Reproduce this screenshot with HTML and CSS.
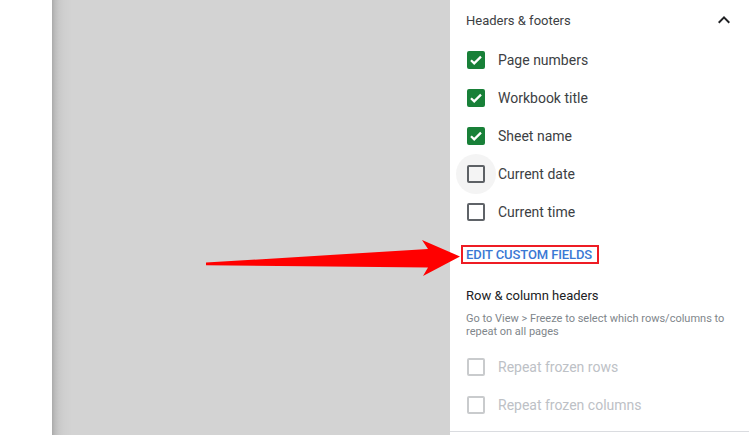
FILE: index.html
```html
<!DOCTYPE html>
<html>
<head>
<meta charset="utf-8">
<link rel="stylesheet" href="styles.css">
</head>
<body>
<div class="screen">
  <div class="gutter"></div>
  <div class="preview"></div>
  <div class="panel">
    <div class="section-head">
      <span class="section-title">Headers &amp; footers</span>
      <svg class="chevron" width="24" height="24" viewBox="0 0 24 24"><path d="M12 8l-6 6 1.41 1.41L12 10.83l4.59 4.58L18 14z" fill="#202124"/></svg>
    </div>
    <ul class="options">
      <li class="option"><span class="box checked"><svg width="18" height="18" viewBox="0 0 18 18"><path d="M4 9.2l3.2 3.2L14 5.6" fill="none" stroke="#fff" stroke-width="2.2"/></svg></span><span class="label">Page numbers</span></li>
      <li class="option"><span class="box checked"><svg width="18" height="18" viewBox="0 0 18 18"><path d="M4 9.2l3.2 3.2L14 5.6" fill="none" stroke="#fff" stroke-width="2.2"/></svg></span><span class="label">Workbook title</span></li>
      <li class="option"><span class="box checked"><svg width="18" height="18" viewBox="0 0 18 18"><path d="M4 9.2l3.2 3.2L14 5.6" fill="none" stroke="#fff" stroke-width="2.2"/></svg></span><span class="label">Sheet name</span></li>
      <li class="option"><span class="box hover"></span><span class="label">Current date</span></li>
      <li class="option"><span class="box"></span><span class="label">Current time</span></li>
    </ul>
    <div class="action-row">
      <span class="link-btn">EDIT CUSTOM FIELDS</span>
    </div>
    <div class="sub-title">Row &amp; column headers</div>
    <p class="hint">Go to View &gt; Freeze to select which rows/columns to repeat on all pages</p>
    <ul class="options disabled">
      <li class="option"><span class="box"></span><span class="label">Repeat frozen rows</span></li>
      <li class="option"><span class="box"></span><span class="label">Repeat frozen columns</span></li>
    </ul>
  </div>
  <svg class="arrow" width="749" height="435" viewBox="0 0 749 435">
    <path d="M206 262.6 L428 249 L422 240 L460 256.5 L423 276 L428 267.5 L206 265.2 Z" fill="#ff0000"/>
  </svg>
</div>
</body>
</html>
```
FILE: styles.css
```css
* { box-sizing: border-box; }
html, body { margin: 0; padding: 0; background: #fff; }
body { font-family: Roboto, "Liberation Sans", Arial, sans-serif; }

.screen {
  position: relative;
  width: 749px;
  height: 435px;
  display: flex;
  overflow: hidden;
}

.gutter { width: 52px; flex: none; background: #fff; }

.preview {
  width: 398px;
  flex: none;
  background: #d3d3d3;
  background-image: linear-gradient(to right, #aaaaaa 0px, #bcbcbc 3px, #c9c9c9 7px, #cfcfcf 12px, #d3d3d3 20px);
}

.panel {
  flex: 1;
  background: #fff;
  padding-left: 16px;
  border-bottom: 1px solid #dadce0;
  height: 432px;
}

.section-head {
  height: 41px;
  display: flex;
  align-items: center;
  justify-content: space-between;
  padding-right: 13px;
  padding-bottom: 1px;
}
.section-title { font-size: 13px; color: #3c4043; }
.chevron { display: block; }

.options { list-style: none; margin: 0; padding: 0; }
.option {
  height: 38px;
  display: flex;
  align-items: center;
  padding-left: 1px;
}
.box {
  position: relative;
  width: 18px;
  height: 18px;
  border: 2px solid #5f6368;
  border-radius: 2px;
  flex: none;
  margin-right: 13px;
}
.box.checked { background: #188038; border-color: #188038; }
.box.checked svg { position: absolute; left: -2px; top: -2px; }
.box.hover::before {
  content: "";
  position: absolute;
  left: -13px;
  top: -13px;
  width: 40px;
  height: 40px;
  border-radius: 50%;
  background: rgba(60, 64, 67, 0.06);
}
.label { font-size: 14px; color: #3c4043; }

.action-row {
  height: 33px;
  display: flex;
  align-items: center;
  padding-top: 14px;
  margin-left: -5px;
}
.link-btn {
  display: inline-block;
  border: 2px solid #ee1c24;
  padding: 0 5px 0 3px;
  height: 19px;
  line-height: 16px;
  font-size: 13px;
  font-weight: 500;
  letter-spacing: -0.1px;
  color: #3a78d4;
}

.sub-title {
  margin-top: 24px;
  font-size: 13px;
  color: #202124;
  line-height: 16px;
}
.hint {
  margin: 8px 0 0;
  font-size: 11px;
  line-height: 13px;
  color: #80868b;
  padding-right: 16px;
}
.options.disabled { margin-top: 10px; }
.options.disabled .box { border-color: #c9cbcd; }
.options.disabled .label { color: #bdc1c6; }

.arrow {
  position: absolute;
  left: 0;
  top: 0;
  pointer-events: none;
}
```
